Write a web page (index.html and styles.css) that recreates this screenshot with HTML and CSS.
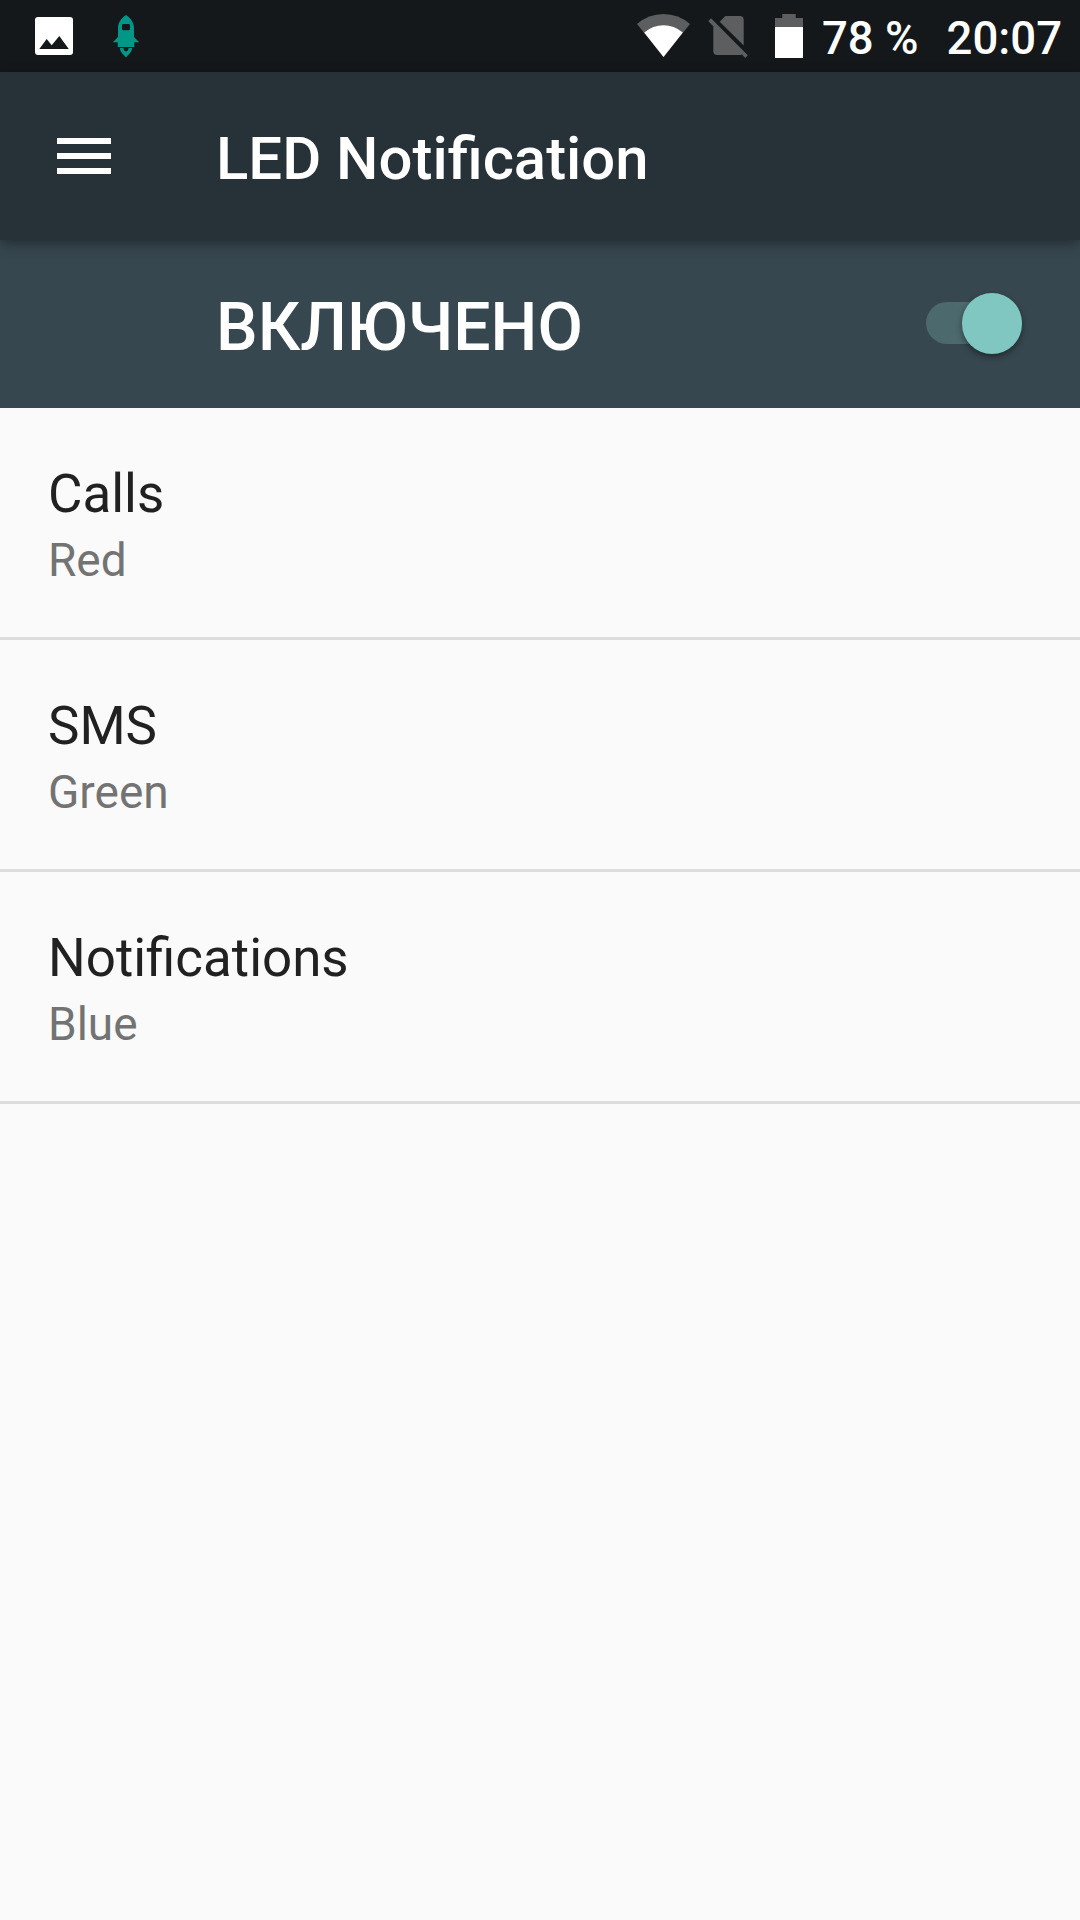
FILE: index.html
```html
<!DOCTYPE html>
<html lang="ru">
<head>
<meta charset="utf-8">
<title>LED Notification</title>
<link rel="stylesheet" href="styles.css">
</head>
<body>
<div class="status-bar">
  <div class="status-notifications">
    <svg class="icon-image" width="38" height="38" viewBox="0 0 38 38">
      <rect width="38" height="38" rx="3" fill="#fff"/>
      <path d="M4.3 32 11.7 22 16.7 28.3 24.3 19 33.8 32Z" fill="#14181b"/>
    </svg>
    <svg class="icon-rocket" width="26" height="43" viewBox="0 0 26 43">
      <path fill="#009688" fill-rule="evenodd" d="M13 0C17 2.500 21 7 21 13V22L26 27V27.300H21.300V32H4.700V27.300H0V27L5 22V13C5 7 9 2.500 13 0ZM10.300 9Q9 9 9 10.300V14Q9 15.300 10.300 15.300H15.700Q17 15.300 17 14V10.300Q17 9 15.700 9Z"/>
      <path fill="#009688" d="M7 33H10.500C10.500 35 11.300 36 13 36.500C14.700 36 15.500 35 15.500 33H19C19 37 16 39 13 42.500C10 39 7 37 7 33Z"/>
    </svg>
  </div>
  <div class="status-system">
    <svg class="icon-wifi" width="53" height="43" viewBox="0 0 53 43">
      <path fill="#5c5e60" d="M0 10Q11.500 0 26.500 0T53 10L26.500 43Z"/>
      <path fill="#fff" d="M7.200 18.500Q16 11.300 26.500 11.300T45.800 18.500L26.500 43Z"/>
    </svg>
    <svg class="icon-sim" width="40" height="42" viewBox="0 0 40 42">
      <path fill="#5c5e60" d="M11.700 5.700 16.500 0.700Q17 0 18 0H32Q35.700 0 35.700 3.700V29.500ZM3 2.300 39.800 39.300 37.300 42 34 38.500Q33 39 32 39H9.300Q5.300 39 5.300 35V10.300L0.300 5.200Z"/>
    </svg>
    <svg class="icon-battery" width="28" height="44" viewBox="0 0 28 44">
      <path fill="#5c5e60" d="M7.300 0H20.700V4H28V14H0V4H7.300Z"/>
      <path fill="#fff" d="M0 13H28V44H0Z"/>
    </svg>
    <span class="battery-level">78 %</span>
    <span class="clock">20:07</span>
  </div>
</div>
<header class="app-bar">
  <svg class="menu" width="54" height="36" viewBox="0 0 54 36">
    <path fill="#fff" d="M0 0H54V6H0ZM0 15H54V21H0ZM0 30H54V36H0Z"/>
  </svg>
  <h1 class="title">LED Notification</h1>
</header>
<div class="switch-bar">
  <span class="switch-label">ВКЛЮЧЕНО</span>
  <div class="switch"><div class="thumb"></div></div>
</div>
<ul class="list">
  <li class="item"><div class="name">Calls</div><div class="value">Red</div></li>
  <li class="item"><div class="name">SMS</div><div class="value">Green</div></li>
  <li class="item"><div class="name">Notifications</div><div class="value">Blue</div></li>
</ul>
</body>
</html>
```
FILE: styles.css
```css
* { box-sizing: border-box; }
body {
  margin: 0;
  min-height: 1920px;
  background: #fafafa;
  font-family: Roboto, sans-serif;
  color: #212121;
}
svg { display: block; flex: none; }
.status-bar {
  display: flex;
  justify-content: space-between;
  height: 72px;
  background: #14181b;
  color: #fff;
}
.status-notifications,
.status-system { display: flex; align-items: flex-start; }
.status-notifications { padding-left: 35px; gap: 40px; }
.status-system { height: 72px; padding-right: 18px; }
.icon-image { margin-top: 17px; }
.icon-rocket { margin-top: 15px; }
.icon-wifi { margin-top: 14px; }
.icon-sim { margin: 16px 0 0 18px; }
.icon-battery { margin: 14px 0 0 27px; }
.battery-level,
.clock {
  padding-top: 3px;
  font-size: 45.5px;
  font-weight: 500;
  line-height: 72px;
  white-space: nowrap;
}
.battery-level { margin-left: 19px; }
.clock { margin-left: 28px; }
.app-bar {
  position: relative;
  display: flex;
  align-items: center;
  height: 168px;
  padding-left: 57px;
  background: #263238;
  box-shadow: 0 4px 12px rgba(0, 0, 0, 0.36);
  color: #fff;
}
.title {
  margin: 0 0 0 105px;
  padding-top: 5px;
  font-size: 59.85px;
  font-weight: 500;
}
.switch-bar {
  display: flex;
  align-items: center;
  justify-content: space-between;
  height: 168px;
  padding: 0 58px 0 216px;
  background: #37474f;
  color: #fff;
}
.switch-label {
  padding-top: 7px;
  font-size: 66px;
  font-weight: 500;
}
.switch {
  display: flex;
  align-items: center;
  justify-content: flex-end;
  width: 96px;
  height: 42px;
  margin-top: -2px;
  border-radius: 21px;
  background: #4c696d;
}
.thumb {
  flex: none;
  width: 60.5px;
  height: 60.5px;
  margin-top: 1px;
  border-radius: 50%;
  background: #7fc7c0;
  box-shadow: 0 3px 6px rgba(0, 0, 0, 0.4);
}
.list { margin: 0; padding: 0; list-style: none; }
.item {
  height: 232px;
  padding: 55px 48px 0;
  border-bottom: 3px solid #dcdcdc;
}
.name { font-size: 52.9px; line-height: 63px; }
.value {
  margin-top: 7px;
  font-size: 46px;
  line-height: 54px;
  color: #737373;
}
```
